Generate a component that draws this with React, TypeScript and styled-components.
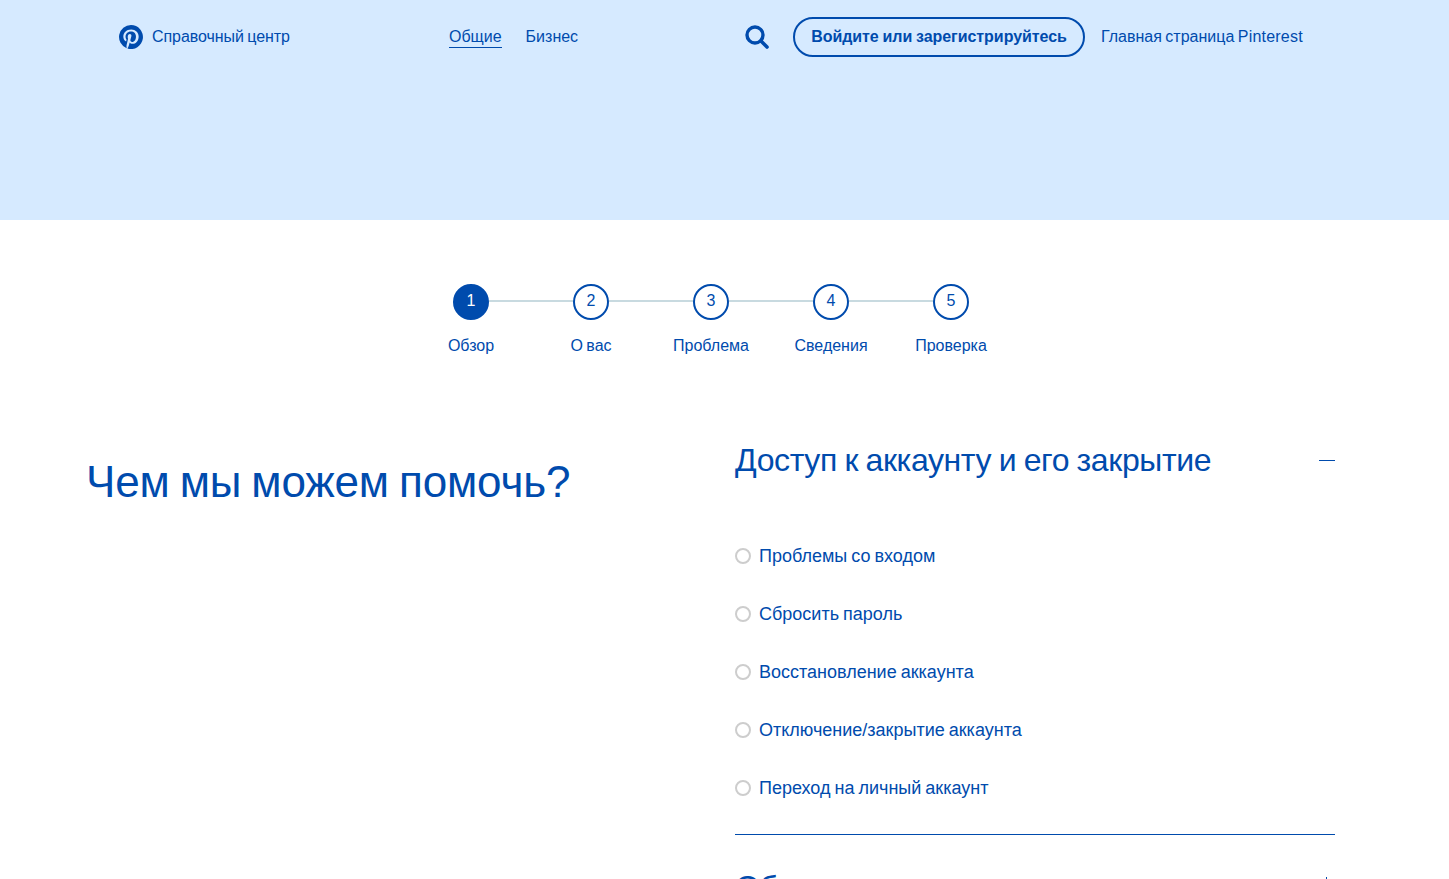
import React from "react";
import styled, { createGlobalStyle } from "styled-components";

const BLUE = "#004bad";

const steps = ["Обзор", "О вас", "Проблема", "Сведения", "Проверка"];

const topics = [
  "Проблемы со входом",
  "Сбросить пароль",
  "Восстановление аккаунта",
  "Отключение/закрытие аккаунта",
  "Переход на личный аккаунт",
];

const App: React.FC = () => {
  return (
    <>
      <GlobalStyle />
      <Hero>
        <TopBar>
          <Brand>
            <svg width="24" height="24" viewBox="0 0 24 24" aria-hidden="true">
              <path
                fill={BLUE}
                d="M12 0a12 12 0 0 0-4.37 23.17c-.1-.95-.2-2.4.04-3.44l1.4-5.96s-.35-.72-.35-1.78c0-1.67.96-2.91 2.17-2.91 1.02 0 1.52.77 1.52 1.69 0 1.03-.66 2.57-.99 4-.28 1.19.6 2.16 1.77 2.16 2.13 0 3.76-2.24 3.76-5.48 0-2.87-2.06-4.87-5-4.87-3.41 0-5.41 2.56-5.41 5.2 0 1.03.4 2.13.89 2.73.1.12.11.22.08.34l-.33 1.36c-.05.22-.18.27-.4.16-1.5-.7-2.44-2.89-2.44-4.65 0-3.78 2.75-7.26 7.92-7.26 4.16 0 7.39 2.97 7.39 6.93 0 4.13-2.61 7.46-6.23 7.46-1.21 0-2.36-.63-2.75-1.38l-.75 2.85c-.27 1.04-1 2.35-1.49 3.15A12 12 0 1 0 12 0z"
              />
            </svg>
            <BrandName>Справочный центр</BrandName>
          </Brand>
          <Nav>
            <NavLink $active>Общие</NavLink>
            <NavLink>Бизнес</NavLink>
          </Nav>
          <Actions>
            <svg width="24" height="24" viewBox="0 0 24 24" aria-hidden="true">
              <circle cx="10" cy="10" r="8" fill="none" stroke={BLUE} strokeWidth="3.4" />
              <path d="M16 16l6 6" stroke={BLUE} strokeWidth="3.6" strokeLinecap="round" />
            </svg>
            <LoginButton>Войдите или зарегистрируйтесь</LoginButton>
            <HomeLink>
              Главная страница <Latin>Pinterest</Latin>
            </HomeLink>
          </Actions>
        </TopBar>
      </Hero>

      <Stepper>
        {steps.map((label, i) => (
          <Step key={label}>
            <StepCircle $current={i === 0}>{i + 1}</StepCircle>
            <StepLabel>{label}</StepLabel>
          </Step>
        ))}
      </Stepper>

      <Main>
        <Heading>Чем мы можем помочь?</Heading>
        <Accordion>
          <Section>
            <SectionHead>
              <SectionTitle>Доступ к аккаунту и его закрытие</SectionTitle>
              <Toggle />
            </SectionHead>
            <TopicList>
              {topics.map((topic) => (
                <Topic key={topic}>
                  <Radio />
                  {topic}
                </Topic>
              ))}
            </TopicList>
          </Section>
          <NextHead>
            <SectionTitle>Об аккаунте</SectionTitle>
            <Toggle $plus />
          </NextHead>
        </Accordion>
      </Main>
    </>
  );
};

const GlobalStyle = createGlobalStyle`
  html, body {
    margin: 0;
    height: 100%;
    overflow: hidden;
    background: #fff;
  }

  body {
    font-family: "Liberation Sans", Arial, sans-serif;
    color: ${BLUE};
    word-spacing: -1px;
  }
`;

const Hero = styled.header`
  height: 220px;
  background: #d6eaff;
`;

const TopBar = styled.div`
  display: grid;
  grid-template-columns: 330px 296px auto;
  align-items: center;
  height: 40px;
  padding: 17px 0 0 119px;
`;

const Brand = styled.div`
  display: flex;
  align-items: center;
  gap: 9px;
`;

const BrandName = styled.span`
  font-size: 16px;
  letter-spacing: -0.06px;
`;

const Nav = styled.nav`
  display: flex;
  gap: 24px;
`;

const NavLink = styled.a<{ $active?: boolean }>`
  font-size: 16px;
  line-height: 20px;
  border-bottom: 1px solid ${(p) => (p.$active ? BLUE : "transparent")};
`;

const Actions = styled.div`
  display: flex;
  align-items: center;
`;

const LoginButton = styled.button`
  height: 40px;
  width: 292px;
  margin: 0 16px 0 24px;
  padding: 0;
  border: 2px solid ${BLUE};
  border-radius: 20px;
  background: transparent;
  color: ${BLUE};
  font-family: inherit;
  font-size: 16px;
  font-weight: 700;
  word-spacing: -0.6px;
  letter-spacing: -0.05px;
`;

const HomeLink = styled.a`
  font-size: 16px;
`;

const Latin = styled.span`
  letter-spacing: 0.22px;
`;

const Stepper = styled.ol`
  display: flex;
  margin: 64px 0 0 411px;
  padding: 0;
  list-style: none;
`;

const Step = styled.li`
  position: relative;
  display: flex;
  flex-direction: column;
  align-items: center;
  width: 120px;

  &:not(:last-child)::after {
    content: "";
    position: absolute;
    top: 16px;
    left: 60px;
    width: 120px;
    height: 2px;
    background: #c8dae0;
  }
`;

const StepCircle = styled.span<{ $current?: boolean }>`
  position: relative;
  z-index: 1;
  box-sizing: border-box;
  display: flex;
  align-items: center;
  justify-content: center;
  width: 36px;
  height: 36px;
  padding-bottom: 2px;
  border: 2px solid ${BLUE};
  border-radius: 50%;
  background: ${(p) => (p.$current ? BLUE : "#fff")};
  color: ${(p) => (p.$current ? "#fff" : BLUE)};
  font-size: 16px;
`;

const StepLabel = styled.span`
  margin-top: 16px;
  font-size: 16px;
  line-height: 20px;
`;

const Main = styled.main`
  display: grid;
  grid-template-columns: 649px 600px;
  margin-top: 84px;
  padding-left: 86px;
`;

const Heading = styled.h1`
  margin: 16px 0 0;
  font-size: 44px;
  font-weight: 400;
  line-height: 52px;
  word-spacing: -2px;
  letter-spacing: -0.15px;
`;

const Accordion = styled.div`
  display: flex;
  flex-direction: column;
`;

const Section = styled.section`
  border-bottom: 1px solid ${BLUE};
`;

const SectionHead = styled.div`
  display: flex;
  align-items: center;
  justify-content: space-between;
`;

const NextHead = styled(SectionHead)`
  padding-top: 32px;
`;

const SectionTitle = styled.h2`
  margin: 0;
  font-size: 32px;
  font-weight: 400;
  line-height: 40px;
  letter-spacing: -0.38px;
`;

const Toggle = styled.span<{ $plus?: boolean }>`
  position: relative;
  width: 16px;
  height: 1px;
  background: ${BLUE};

  &::after {
    content: "";
    display: ${(p) => (p.$plus ? "block" : "none")};
    position: absolute;
    top: -10px;
    left: 7px;
    width: 1px;
    height: 20px;
    background: ${BLUE};
  }
`;

const TopicList = styled.ul`
  display: flex;
  flex-direction: column;
  gap: 34px;
  margin: 0;
  padding: 64px 0 34px;
  list-style: none;
`;

const Topic = styled.li`
  display: flex;
  align-items: center;
  gap: 8px;
  height: 24px;
  font-size: 18px;
`;

const Radio = styled.span`
  box-sizing: border-box;
  width: 16px;
  height: 16px;
  border: 2px solid #cdcdcd;
  border-radius: 50%;
`;

export default App;
